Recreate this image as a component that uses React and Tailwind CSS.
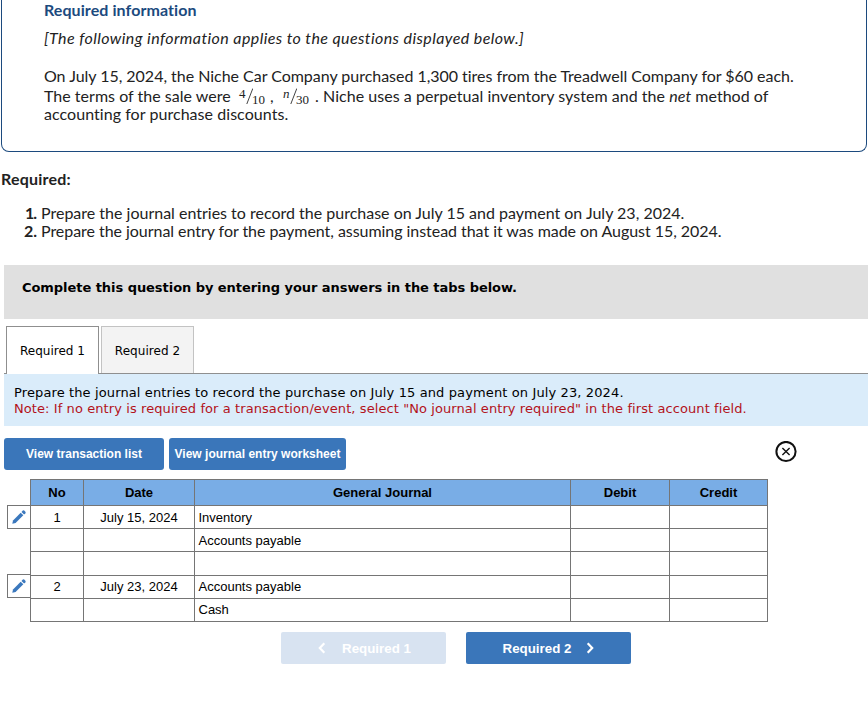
import clsx from 'clsx';

const rows = [
    { no: '1', date: 'July 15, 2024', account: 'Inventory', editable: true, height: 'h-[23px]', pad: 'pt-px' },
    { account: 'Accounts payable', height: 'h-[23px]', pad: 'pt-px' },
    { height: 'h-[24px]' },
    { no: '2', date: 'July 23, 2024', account: 'Accounts payable', editable: true, height: 'h-[23px]', edit: '-mt-px' },
    { account: 'Cash', height: 'h-[24px]', last: 'border-b' },
];

const cell = 'border-l border-t border-[#757575] flex items-center';
const head = 'bg-[#79ade6] justify-center';

function Fraction({ top, bottom, italic }) {
    return (
        <span className="inline-flex h-[18px] font-['Liberation_Serif'] leading-[9px] tracking-normal text-[#222]">
            <span className={clsx('mt-[2px] w-[7px] text-[13px]', italic && 'italic')}>{top}</span>
            <svg width="7" height="18" viewBox="0 0 7 18" fill="none" stroke="#444" strokeWidth="1">
                <path d="M6.8 1.5L0.8 17" />
            </svg>
            <span className="-ml-px mt-[8px] w-[14px] text-[13px]">{bottom}</span>
        </span>
    );
}

function Pencil() {
    return (
        <svg width="14" height="14" viewBox="0 0 14 14" fill="#3b78bd">
            <path d="M0.3 13.7L1 10.4L8.7 2.7L11.3 5.3L3.6 13Z" />
            <path d="M9.5 1.9L10.8 0.6Q11.5 0 12.2 0.6L13.4 1.8Q14 2.5 13.4 3.2L12.1 4.5Z" />
        </svg>
    );
}

function Chevron({ left }) {
    return (
        <svg width="8" height="12" viewBox="0 0 8 12" fill="none" stroke="currentColor" strokeWidth="2.2">
            <path d={left ? 'M6.3 1.2L1.8 6L6.3 10.8' : 'M1.7 1.2L6.2 6L1.7 10.8'} />
        </svg>
    );
}

function Information() {
    return (
        <section className="ml-px h-[152px] w-[866px] whitespace-nowrap rounded-b-lg border border-t-0 border-[#1c4a7e] pl-[42px] text-base leading-[18px] text-[#222]">
            <h2 className="pt-px font-bold tracking-[0.08px] text-[#1c4a7e]">Required information</h2>
            <p className="mt-[10px] italic tracking-[0.41px]">
                [The following information applies to the questions displayed below.]
            </p>
            <p className="mt-5 tracking-[-0.026px]">
                On July 15, 2024, the Niche Car Company purchased 1,300 tires from the Treadwell Company for $60 each.
            </p>
            <div className="mt-[2px] flex h-[18px]">
                <span className="w-[195px] tracking-[0.02px]">The terms of the sale were</span>
                <Fraction top="4" bottom="10" />
                <span className="ml-[4px] w-[13px]">,</span>
                <Fraction top="n" bottom="30" italic />
                <span className="ml-[5px] w-[8px]">.</span>
                <span className="tracking-[0.04px]">
                    Niche uses a perpetual inventory system and the <em>net</em> method of
                </span>
            </div>
            <p className="tracking-[0.05px]">accounting for purchase discounts.</p>
        </section>
    );
}

function Journal() {
    return (
        <div className="ml-[7px] mt-[9px] w-[761px] font-['Liberation_Sans'] text-[13px] leading-4 text-black">
            <div className="flex h-[26px] font-bold">
                <div className="w-[23px]" />
                <div className={clsx(cell, head, 'w-[53px]')}>No</div>
                <div className={clsx(cell, head, 'w-[111px]')}>Date</div>
                <div className={clsx(cell, head, 'w-[376px]')}>General Journal</div>
                <div className={clsx(cell, head, 'w-[99px]')}>Debit</div>
                <div className={clsx(cell, head, 'w-[99px] border-r')}>Credit</div>
            </div>
            {rows.map((row, i) => (
                <div key={i} className={clsx('flex', row.height)}>
                    <div className="w-[23px]">
                        {row.editable && (
                            <div
                                className={clsx(
                                    'flex h-[24px] items-center justify-center border border-r-0 border-[#757575]',
                                    row.edit
                                )}
                            >
                                <Pencil />
                            </div>
                        )}
                    </div>
                    <div className={clsx(cell, 'w-[53px] justify-center', row.pad, row.last)}>{row.no}</div>
                    <div className={clsx(cell, 'w-[111px] justify-center', row.pad, row.last)}>{row.date}</div>
                    <div className={clsx(cell, 'w-[376px] pl-[3.5px]', row.pad, row.last)}>{row.account}</div>
                    <div className={clsx(cell, 'w-[99px]', row.last)} />
                    <div className={clsx(cell, 'w-[99px] border-r', row.last)} />
                </div>
            ))}
        </div>
    );
}

function App() {
    return (
        <div className="h-[721px] w-[868px] overflow-hidden bg-white font-['Lato',sans-serif]">
            <Information />

            <div className="whitespace-nowrap text-base leading-[18px] text-[#222]">
                <h3 className="ml-px mt-[18px] font-bold tracking-[0.2px]">Required:</h3>
                <ol className="mt-4">
                    <li className="flex">
                        <b className="w-[41px] pr-[5px] text-right tracking-[-1px]">1.</b>
                        <span>Prepare the journal entries to record the purchase on July 15 and payment on July 23, 2024.</span>
                    </li>
                    <li className="flex">
                        <b className="w-[41px] pr-1 text-right">2.</b>
                        <span className="tracking-[-0.045px]">
                            Prepare the journal entry for the payment, assuming instead that it was made on August 15, 2024.
                        </span>
                    </li>
                </ol>
            </div>

            <div className="ml-1 mt-[25px] h-[54px] whitespace-nowrap bg-[#e0e0e0] pl-[18px] pt-[15px] font-['DejaVu_Sans'] text-[13px] font-bold leading-4 tracking-[-0.05px] text-black">
                Complete this question by entering your answers in the tabs below.
            </div>

            <div className="ml-1 mt-[7px] flex h-12 border-b border-[#8f8f8f] pl-[2px] font-['DejaVu_Sans'] text-[12px] text-black">
                <button className="h-12 w-[93px] border border-b-0 border-[#8f8f8f] bg-white">Required 1</button>
                <button className="ml-[2px] h-[47px] w-[93px] border border-b-0 border-[#c3c3c3] bg-[#f3f3f3] pt-px tracking-[0.05px]">
                    Required 2
                </button>
            </div>

            <div className="ml-1 h-[52px] whitespace-nowrap bg-[#daecfa] pl-[10px] pt-[11px] font-['DejaVu_Sans'] text-[13px] leading-4 text-black">
                <p className="tracking-[0.12px]">
                    Prepare the journal entries to record the purchase on July 15 and payment on July 23, 2024.
                </p>
                <p className="tracking-[0.087px] text-[#b3131b]">
                    Note: If no entry is required for a transaction/event, select "No journal entry required" in the first account field.
                </p>
            </div>

            <div className="ml-1 mt-3 flex h-8 font-['Liberation_Sans'] text-[12px] font-bold text-white">
                <button className="w-40 rounded-[3px] bg-[#3a76ba]">View transaction list</button>
                <button className="ml-[5px] w-[177px] whitespace-nowrap rounded-[3px] bg-[#3a76ba]">
                    View journal entry worksheet
                </button>
                <button className="ml-[429px] mt-[3px] h-[22px]">
                    <svg width="22" height="22" viewBox="0 0 22 22" fill="none" stroke="#111">
                        <circle cx="11" cy="10.5" r="9.6" strokeWidth="2" />
                        <path d="M7.4 7L14.6 14M14.6 7L7.4 14" strokeWidth="1.4" />
                    </svg>
                </button>
            </div>

            <Journal />

            <div className="ml-[281px] mt-[10px] flex h-8 gap-5 font-['Liberation_Sans'] text-[13.33px] font-bold text-white">
                <button className="flex w-[165px] items-center justify-center gap-4 rounded-[2px] bg-[#d8e3f1] pl-[2px]">
                    <Chevron left />
                    <span className="pt-px">Required 1</span>
                </button>
                <button className="flex w-[165px] items-center justify-center gap-[15px] rounded-[2px] bg-[#3a76ba]">
                    <span className="pt-px">Required 2</span>
                    <Chevron />
                </button>
            </div>
        </div>
    );
}

export default App;
